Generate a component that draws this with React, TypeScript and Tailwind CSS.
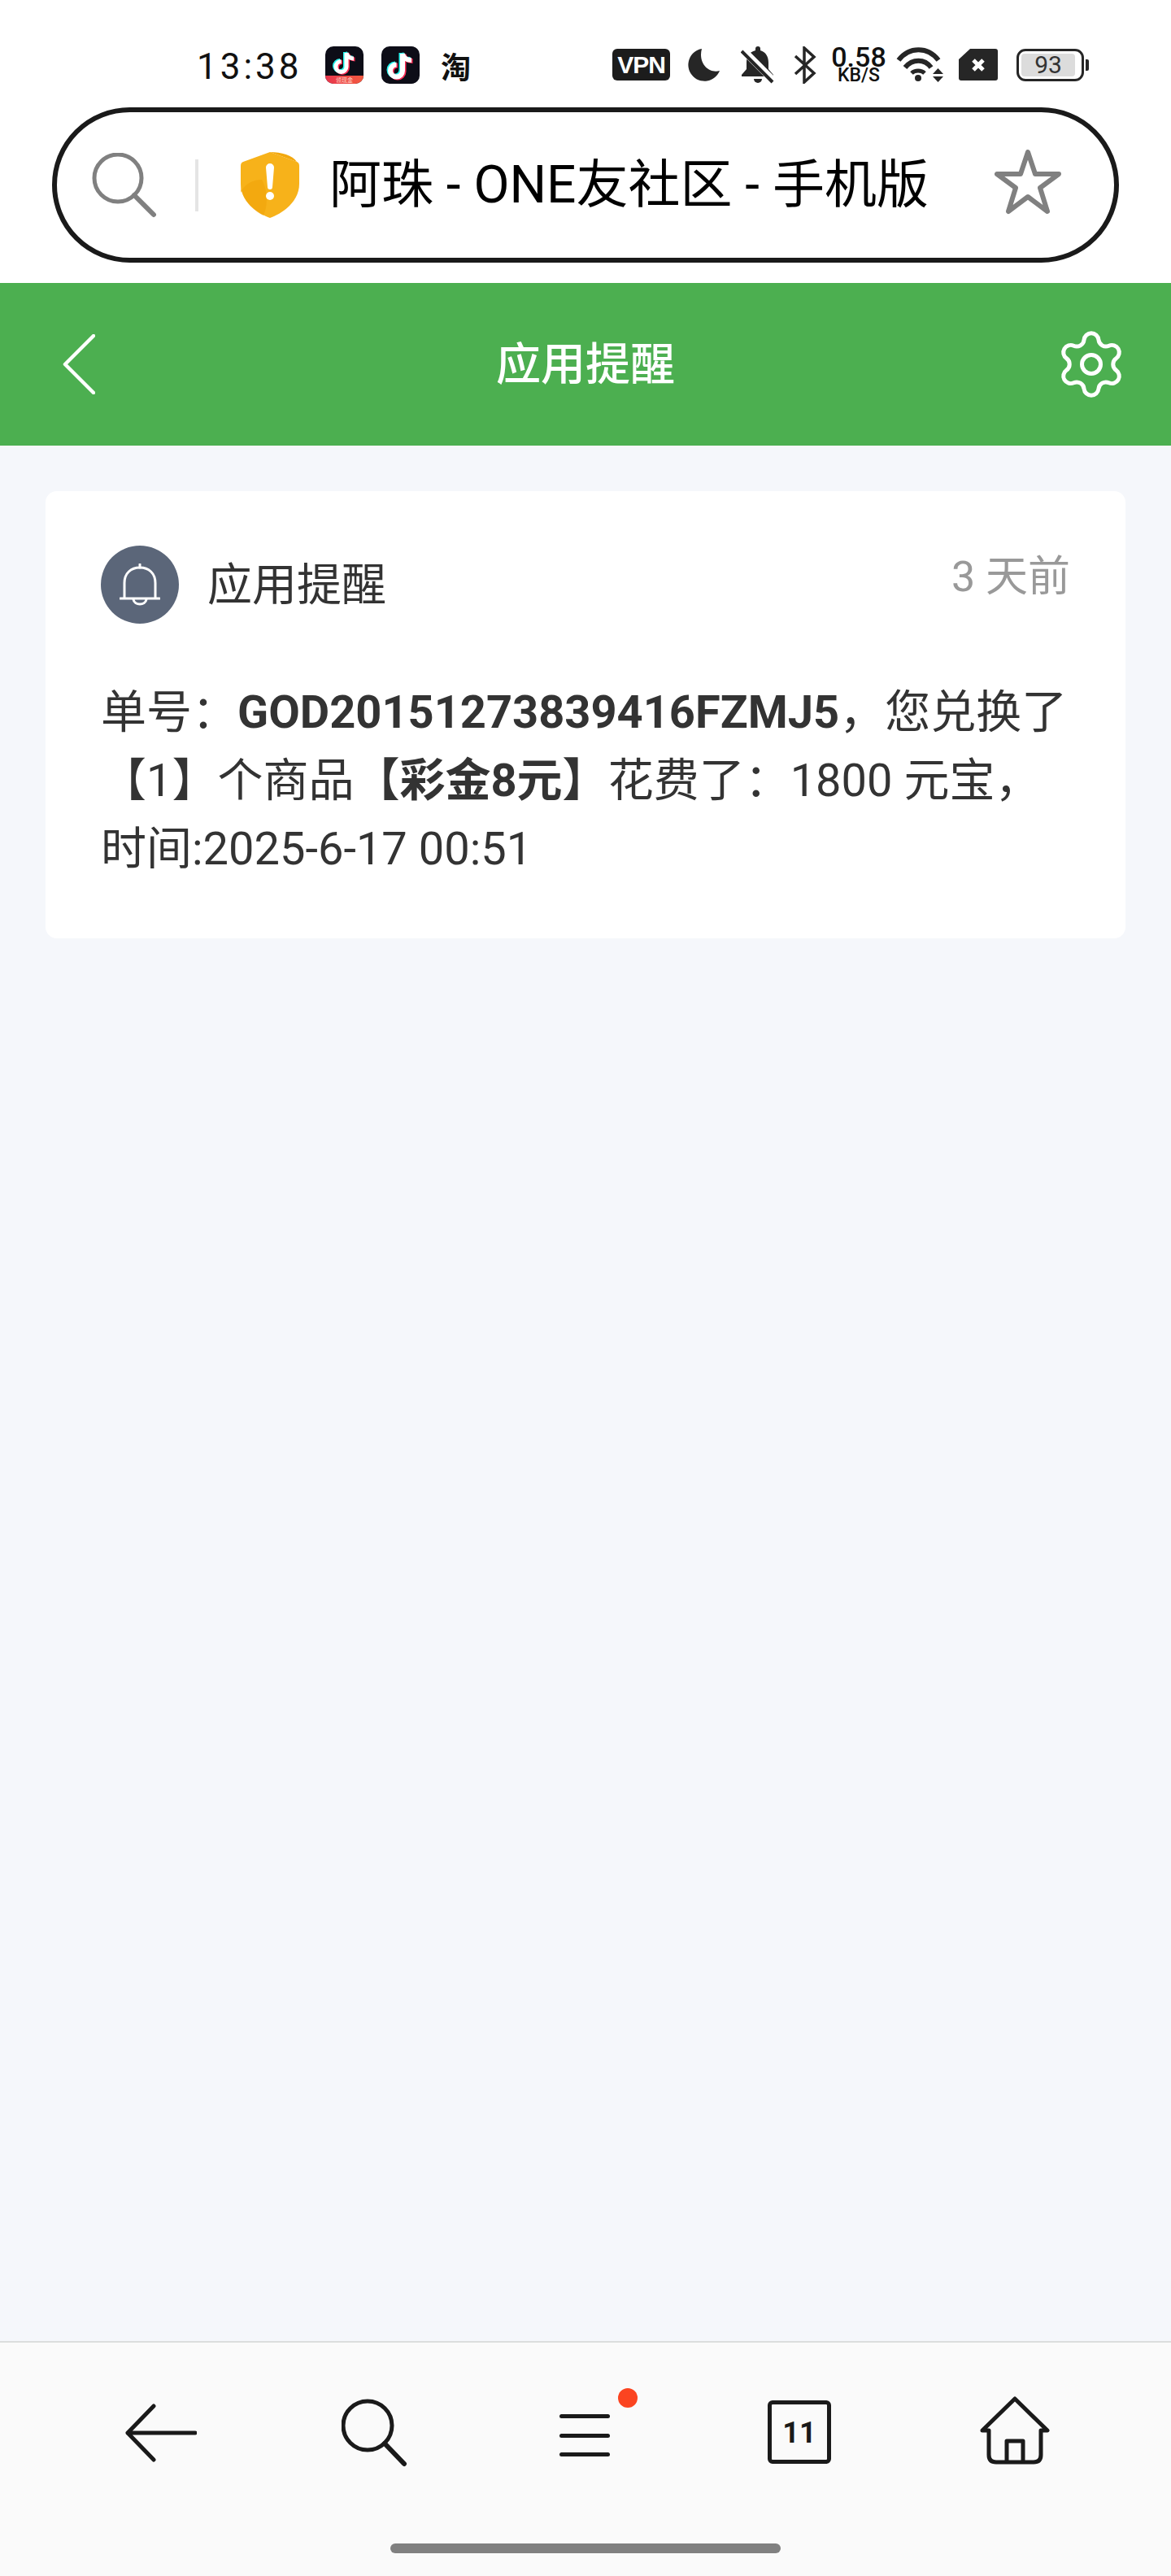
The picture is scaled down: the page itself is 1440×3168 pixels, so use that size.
import { Settings } from "lucide-react";

const font = "font-['Roboto','Noto_Sans_CJK_SC',sans-serif]";

function TikTokIcon({ small }: { small?: boolean }) {
  const d = small ? "M26 8V25A6.5 6.5 0 1 1 19.5 18.5M26 8C27 12 30 15 35 15" : "M26 9V30A7.5 7.5 0 1 1 18.5 22.500M26 9C27 14 31 17 37 17";
  return (
    <div className="relative w-[47px] h-[46px] rounded-[10px] bg-[#0d0d17] overflow-hidden">
      <svg width="47" height="46" viewBox="0 0 47 46" fill="none" strokeWidth={small ? 5 : 6}>
        <path d={d} stroke="#25f4ee" transform="translate(-1.500 -1)" />
        <path d={d} stroke="#fe2c55" transform="translate(1.500 1)" />
        <path d={d} stroke="#fff" />
      </svg>
      {small && (
        <div className="absolute left-0 right-0 bottom-0 h-[10px] bg-gradient-to-r from-[#e8354d] to-[#f3593f] text-[7px] leading-[10px] text-[#ffd9c9] text-center font-['Noto_Sans_CJK_SC',sans-serif]">
          领现金
        </div>
      )}
    </div>
  );
}

function StatusBar() {
  return (
    <div className="h-[132px] flex items-start pt-[57px] pl-[242px] text-[#111]">
      <span className={`${font} text-[44px] leading-[50px] tracking-[4px] w-[158px] shrink-0`}>13:38</span>
      <TikTokIcon small />
      <div className="ml-[22px]">
        <TikTokIcon />
      </div>
      <span className="ml-[26px] w-[40px] mt-[4px] text-[37px] leading-[40px] font-bold font-['Noto_Sans_CJK_SC',sans-serif]">淘</span>
      <div className="ml-[171px] mt-[3px] w-[71px] h-[39px] rounded-[6px] bg-[#1c1c1c] text-white text-[30px] leading-[39px] font-bold text-center font-['Liberation_Sans',sans-serif] tracking-[-1px]">
        VPN
      </div>
      <svg className="ml-[22px] mt-[2px]" width="40" height="41" viewBox="0 0 40 41" fill="#262626">
        <path d="M17 1A20 20 0 1 0 39 28C27 32 12 20 17 1Z" />
      </svg>
      <svg className="ml-[25px]" width="41" height="46" viewBox="0 0 41 46" fill="none">
        <path d="M21 0a3 3 0 0 1 3 3v2c7 2 10 8 10 15v8l6 7v2H1v-2l6-7v-8c0-7 3-13 11-15V3a3 3 0 0 1 3-3Z" fill="#262626" />
        <path d="M16 40h10a5 5 0 0 1-10 0Z" fill="#262626" />
        <path d="M0 2L40 42" stroke="#fff" strokeWidth="9" />
        <path d="M1 6L39 44" stroke="#262626" strokeWidth="4" />
      </svg>
      <svg className="ml-[24px]" width="28" height="46" viewBox="0 0 28 46" fill="none" stroke="#262626" strokeWidth="3.500">
        <path d="M2 12L25 33L13 44V2L25 13L2 34" />
      </svg>
      <div className={`${font} ml-[18px] w-[68px] -mt-[1px] text-center font-medium text-[#111]`}>
        <div className="text-[34px] leading-[28px]">0.58</div>
        <div className="text-[23px] leading-[18px]">KB/S</div>
      </div>
      <svg className="ml-[12px]" width="59" height="45" viewBox="0 0 59 45" fill="none" stroke="#262626">
        <path d="M3 17C16 0 39 0 52 17" strokeWidth="6" />
        <path d="M11 26C20 15 35 15 43 26" strokeWidth="6" />
        <path d="M19 33C23 29 31 29 35 33" strokeWidth="5" />
        <circle cx="27" cy="39" r="4" fill="#262626" stroke="none" />
        <path d="M45 34L51.500 27L58 34Z" fill="#262626" stroke="none" />
        <path d="M45 37L51.500 44L58 37Z" fill="#262626" stroke="none" />
      </svg>
      <svg className="ml-[18px] mt-[3px]" width="48" height="39" viewBox="0 0 48 39">
        <path d="M14 0H45a3 3 0 0 1 3 3V36a3 3 0 0 1-3 3H3a3 3 0 0 1-3-3V13Z" fill="#262626" />
        <path d="M18 14L30 26M30 14L18 26" stroke="#fff" strokeWidth="5" />
      </svg>
      <div className="ml-[23px] mt-[3px] flex items-center">
        <div className="w-[83px] h-[40px] rounded-[11px] border-[3px] border-[#262626] p-[3px]">
          <div className={`${font} h-full w-[66px] rounded-[4px] bg-[#dcdcdc] text-[#333] text-[30px] leading-[28px] text-center`}>93</div>
        </div>
        <div className="ml-[2px] w-[4px] h-[14px] rounded-r-[2px] bg-[#262626]" />
      </div>
    </div>
  );
}

function UrlPill() {
  return (
    <div className="mx-[64px] h-[191px] w-[1312px] rounded-full border-[6px] border-[#1a1a1a] flex items-center pl-[43px]">
      <svg width="80" height="80" viewBox="0 0 80 80" fill="none" stroke="#808080" strokeWidth="5" strokeLinecap="round">
        <circle cx="32" cy="31" r="29" />
        <path d="M52 52L76 76" strokeWidth="6" />
      </svg>
      <div className="ml-[47px] w-[4px] h-[64px] bg-[#e5e5e5]" />
      <svg className="ml-[52px]" width="72" height="81" viewBox="0 0 72 81">
        <path d="M36 0L69 12Q72 13 72 17V39C72 62 50 76 36 81C22 76 0 62 0 39V17Q0 13 3 12Z" fill="#f7b21a" />
        <path d="M36 0L69 12C64 4 50 0 36 0Z" fill="#f2a80e" />
        <path d="M0 39C0 58 16 72 28 78C36 60 30 40 26 34C14 34 4 40 0 50Z" fill="#f1a50c" opacity="0.7" />
        <path d="M31 19a5 5 0 0 1 10 0L39 43a3 3 0 0 1-6 0Z" fill="#fff" />
        <circle cx="36" cy="54" r="5" fill="#fff" />
      </svg>
      <span className={`${font} ml-[37px] w-[818px] shrink-0 whitespace-nowrap text-[64px] leading-[80px] text-black`}>阿珠 - ONE友社区 - 手机版</span>
      <svg className="-mt-[8px]" width="82" height="80" viewBox="0 0 82 80" fill="none" stroke="#808080" strokeWidth="6" strokeLinejoin="round">
        <path d="M41 3L50 30H79L56 47L65 76L41 58L17 76L26 47L3 30H32Z" />
      </svg>
    </div>
  );
}

function GreenHeader() {
  return (
    <div className="mt-[25px] h-[200px] bg-[#4caf50] grid grid-cols-[1fr_auto_1fr] items-center px-[55px] text-white">
      <svg className="ml-[22px]" width="40" height="74" viewBox="0 0 40 74" fill="none" stroke="#fff" strokeWidth="4.500" strokeLinecap="round" strokeLinejoin="round">
        <path d="M38 2L3 37L38 72" />
      </svg>
      <span className={`${font} text-[55px] leading-[84px] font-medium`}>应用提醒</span>
      <Settings className="justify-self-end -mr-[3px]" size={92} strokeWidth={1.300} />
    </div>
  );
}

function NoticeCard() {
  return (
    <div className={`${font} mx-[56px] mt-[56px] bg-white rounded-[14px] pt-[67px] pb-[68px] px-[68px] text-[56px] leading-[84px] text-[#333]`}>
      <div className="flex items-start justify-between">
        <div className="flex items-center">
          <div className="w-[96px] h-[96px] rounded-full bg-[#5b6679] flex items-center justify-center">
            <svg width="50" height="52" viewBox="0 0 50 52" fill="none" stroke="#fff" strokeWidth="3" strokeLinecap="round">
              <path d="M25 1V5" />
              <path d="M6 42V24C6 12 14 5 25 5C36 5 44 12 44 24V42" />
              <path d="M1 43H49" />
              <path d="M17 44C18 52 32 52 33 44" />
            </svg>
          </div>
          <span className="ml-[35px] text-[55px]">应用提醒</span>
        </div>
        <span className="text-[52px] leading-[78px] text-[#999]">3 天前</span>
      </div>
      <p className="mt-[67px]">
        单号：<b>GOD20151273839416FZMJ5</b>，您兑换了【1】个商品<b>【彩金8元】</b>花费了：1800 元宝，时间:2025-6-17 00:51
      </p>
    </div>
  );
}

function BottomBar() {
  return (
    <div className="h-[289px] border-t-2 border-[#dcdedd] bg-[#fafafa] flex flex-col">
      <div className="flex items-start pl-[154px] pt-[56px] h-[247px]">
        <svg className="mt-[19px]" width="88" height="72" viewBox="0 0 88 72" fill="none" stroke="#1a1a1a" strokeWidth="5" strokeLinecap="round" strokeLinejoin="round">
          <path d="M86 36H3M35 3L3 36L35 69" />
        </svg>
        <svg className="ml-[178px] mt-[13px]" width="82" height="84" viewBox="0 0 82 84" fill="none" stroke="#1a1a1a" strokeWidth="5" strokeLinecap="round">
          <circle cx="32" cy="33" r="30" />
          <path d="M53 55L77 80" strokeWidth="6" />
        </svg>
        <div className="relative ml-[186px] mt-[32px] w-[62px] flex flex-col gap-[18.500px]">
          <div className="h-[5px] rounded-full bg-[#1a1a1a]" />
          <div className="h-[5px] rounded-full bg-[#1a1a1a]" />
          <div className="h-[5px] rounded-full bg-[#1a1a1a]" />
          <div className="absolute -top-[32px] -right-[34px] w-[24px] h-[24px] rounded-full bg-[#fb4420]" />
        </div>
        <div className={`${font} ml-[194px] mt-[15px] w-[78px] h-[78px] rounded-[6px] border-[5px] border-[#1a1a1a] flex items-center justify-center text-[36px] leading-none font-bold text-[#1a1a1a] pt-[2px]`}>
          11
        </div>
        <svg className="ml-[183px] mt-[10px]" width="86" height="84" viewBox="0 0 86 84" fill="none" stroke="#1a1a1a" strokeWidth="5" strokeLinecap="round" strokeLinejoin="round">
          <path d="M3 42L43 3L83 42H75V72Q75 81 66 81H20Q11 81 11 72V42Z" />
          <path d="M33 80V55H53V80" />
        </svg>
      </div>
      <div className="mx-auto w-[480px] h-[12px] rounded-full bg-[#808080]" />
    </div>
  );
}

export default function App() {
  return (
    <div className="w-[1440px] h-[3168px] flex flex-col bg-[#f5f7fb]">
      <div className="bg-white">
        <StatusBar />
        <UrlPill />
        <GreenHeader />
      </div>
      <div className="flex-1">
        <NoticeCard />
      </div>
      <BottomBar />
    </div>
  );
}
